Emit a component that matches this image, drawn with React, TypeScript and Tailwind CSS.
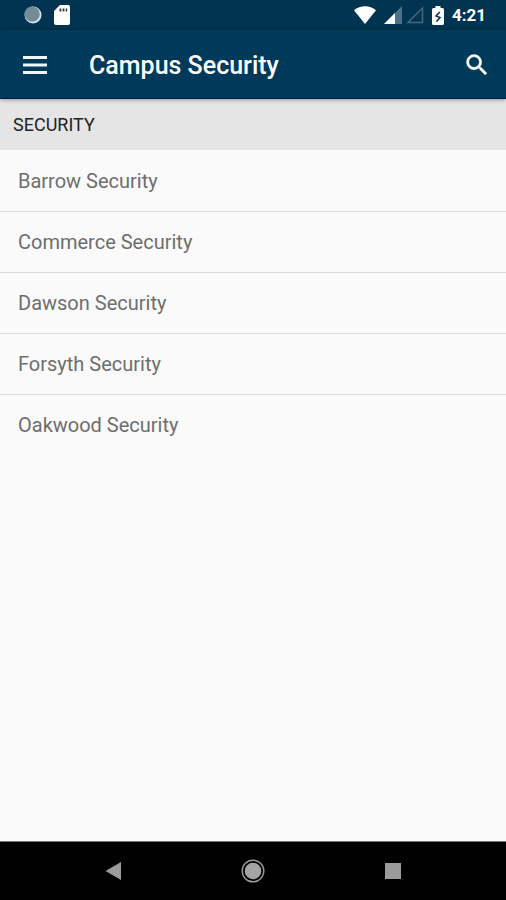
const campuses = ["Barrow", "Commerce", "Dawson", "Forsyth", "Oakwood"];

const StatusBar = () => (
	<div className="flex h-[30px] items-center justify-between bg-[#003450] pl-6 pr-5 text-white">
		<div className="flex items-center gap-3">
			<svg className="size-[18px]" viewBox="0 0 18 18">
				<circle cx="9" cy="9" r="8.5" fill="#dde3e6" />
				<circle cx="8.2" cy="8.2" r="7.6" fill="#748c99" />
			</svg>
			<svg className="h-[20px] w-[16px]" viewBox="0 0 16 20">
				<path
					d="M6 0h8a2 2 0 0 1 2 2v16a2 2 0 0 1-2 2H2a2 2 0 0 1-2-2V6z"
					fill="#fff"
				/>
				<path
					d="M5.5 3.5h1.8v3H5.5zM8.6 3.5h1.8v3H8.6zM11.7 3.5h1.5v3h-1.5z"
					fill="#3b3540"
				/>
			</svg>
		</div>
		<div className="flex items-center gap-2">
			<svg className="h-[18px] w-[22px]" viewBox="0 0 22 18">
				<path d="M0 4.2C6.2-1.2 15.8-1.2 22 4.2L11 18z" fill="#fff" />
			</svg>
			<div className="flex items-center gap-1">
				<svg className="size-[18px]" viewBox="0 0 18 18">
					<path d="M18 0v18H0z" fill="#4c7288" />
					<path d="M11 7v11H0z" fill="#fff" />
				</svg>
				<svg className="size-[18px]" viewBox="0 0 18 18">
					<path
						d="M16.5 2v14.5H2z"
						fill="none"
						stroke="#44687e"
						strokeWidth="1.5"
					/>
				</svg>
			</div>
			<svg className="h-[19px] w-[12px]" viewBox="0 0 12 19">
				<path
					d="M3.5 0h5v2h2A1.5 1.5 0 0 1 12 3.5v14a1.5 1.5 0 0 1-1.5 1.5h-9A1.5 1.5 0 0 1 0 17.5v-14A1.5 1.5 0 0 1 1.5 2h2z"
					fill="#fff"
				/>
				<path
					d="M7.8 6L4 10l4 1.5-3.500 4"
					fill="none"
					stroke="#00304c"
					strokeWidth="1.5"
				/>
			</svg>
			<span className="text-[17px] font-bold leading-5">4:21</span>
		</div>
	</div>
);

const Toolbar = () => (
	<header className="relative flex h-[69px] items-center border-b border-[#07194a] bg-[#003a5a] pl-[23px] pr-[15px] pt-[2px] text-white shadow-[0_1px_4px_rgba(0,0,0,0.35)]">
		<button type="button" aria-label="Menu">
			<svg className="h-[18px] w-[24px]" viewBox="0 0 24 18">
				<path d="M0 0h24v3H0zM0 7.5h24v3H0zM0 15h24v3H0z" fill="#f1f5f8" />
			</svg>
		</button>
		<h1 className="ml-[42px] flex-1 pt-px text-[25px] font-medium leading-8">
			Campus Security
		</h1>
		<button type="button" aria-label="Search">
			<svg className="size-7" viewBox="0 0 24 24">
				<path
					d="M15.5 14h-.79l-.28-.27A6.47 6.47 0 0 0 16 9.5 6.5 6.5 0 1 0 9.5 16c1.61 0 3.09-.59 4.23-1.57l.27.28v.79l5 4.99L20.49 19zm-6 0C7.01 14 5 11.99 5 9.5S7.01 5 9.5 5 14 7.01 14 9.5 11.99 14 9.5 14z"
					fill="#fff"
					stroke="#fff"
					strokeWidth="0.4"
				/>
			</svg>
		</button>
	</header>
);

const NavigationBar = () => (
	<nav className="flex h-[59px] items-center justify-center gap-[116px] border-t border-[#777] bg-black">
		<button type="button" aria-label="Back">
			<svg className="size-6" viewBox="0 0 24 24">
				<path d="M4.5 12L20 3v18z" fill="#9b9b9b" />
			</svg>
		</button>
		<button type="button" aria-label="Home">
			<svg className="size-6" viewBox="0 0 24 24">
				<circle
					cx="12"
					cy="12"
					r="10.8"
					fill="none"
					stroke="#9b9b9b"
					strokeWidth="1.4"
				/>
				<circle cx="12" cy="12" r="8.3" fill="#a5a5a5" />
			</svg>
		</button>
		<button type="button" aria-label="Recent apps">
			<svg className="size-6" viewBox="0 0 24 24">
				<rect x="4" y="4" width="16" height="16" fill="#9b9b9b" />
			</svg>
		</button>
	</nav>
);

const App = () => (
	<div className="flex min-h-screen flex-col bg-[#fafafa] font-['Roboto',sans-serif]">
		<StatusBar />
		<Toolbar />
		<main className="flex-1">
			<h2 className="bg-[#e5e5e5] px-[13px] py-[13px] text-[18px] leading-[25px] text-[#222]">
				SECURITY
			</h2>
			<ul className="divide-y divide-[#dcdcdc] pt-px">
				{campuses.map((campus) => (
					<li key={campus}>
						<a
							href={`#${campus.toLowerCase()}`}
							className="block px-[18px] py-4 text-[20px] leading-7 text-[#6e6e6e]"
						>
							{campus} Security
						</a>
					</li>
				))}
			</ul>
		</main>
		<NavigationBar />
	</div>
);

export default App;
